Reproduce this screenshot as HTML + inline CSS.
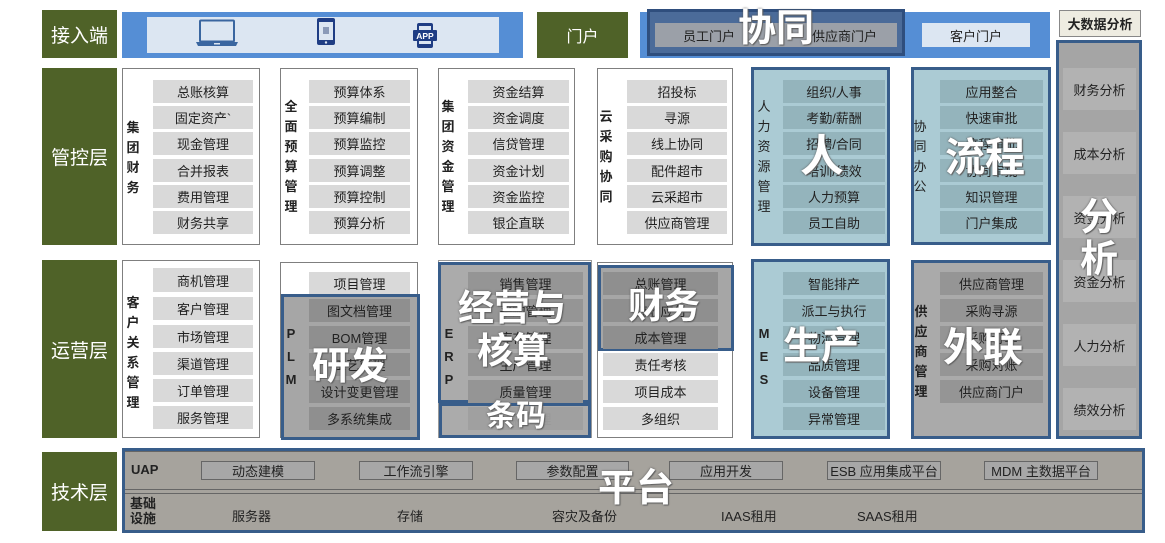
<!DOCTYPE html>
<html><head><meta charset="utf-8">
<style>
*{margin:0;padding:0;box-sizing:border-box}
body{width:1165px;height:543px;background:#fff;position:relative;overflow:hidden;font-family:"Liberation Sans","Noto Sans CJK SC",sans-serif;color:#222}
.a{position:absolute}
.g{background:#4f6228;color:#fff;font-size:19px;display:flex;align-items:center;justify-content:center}
.box{position:absolute;border:1px solid #7f7f7f;background:#fff}
.it{position:absolute;height:23px;background:#d9d9d9;font-size:13px;display:flex;align-items:center;justify-content:center;white-space:nowrap}
.vl{position:absolute;font-size:13px;font-weight:bold;width:14px;line-height:20px;text-align:center}
.bb{position:absolute;border:3px solid #385d8a}
.big{position:absolute;color:#fff;font-weight:bold;text-shadow:0 0 2px #555,1px 1px 1px #666;white-space:nowrap;line-height:1}
.btn{position:absolute;top:461px;height:19px;border:1px solid #666;background:#a7a7a7;font-size:13px;display:flex;align-items:center;justify-content:center}
.tt{position:absolute;top:506px;font-size:13px}
.an{position:absolute;left:1063px;width:73px;height:42px;background:#b2b2b2;font-size:13px;display:flex;align-items:center;justify-content:center}
</style></head><body>

<!-- left labels -->
<div class="a g" style="left:42px;top:10px;width:75px;height:48px">接入端</div>
<div class="a g" style="left:42px;top:68px;width:75px;height:177px">管控层</div>
<div class="a g" style="left:42px;top:260px;width:75px;height:178px">运营层</div>
<div class="a g" style="left:42px;top:452px;width:75px;height:79px">技术层</div>

<!-- access -->
<div class="a" style="left:122px;top:12px;width:401px;height:46px;background:#558ed5"></div>
<div class="a" style="left:147px;top:17px;width:352px;height:36px;background:#dce6f2"></div>
<svg class="a" style="left:195px;top:19px" width="44" height="28" viewBox="0 0 44 28"><rect x="5" y="1.5" width="34" height="21" rx="1" fill="none" stroke="#3a66a0" stroke-width="2"/><path d="M1 23h42l-2 4H3z" fill="#3a66a0"/><rect x="19" y="24" width="6" height="1.5" fill="#dce6f2"/></svg>
<svg class="a" style="left:316px;top:17px" width="20" height="29" viewBox="0 0 20 29"><rect x="1" y="1" width="18" height="27" rx="2" fill="#1f3d84"/><rect x="3" y="5" width="14" height="18" fill="#dce6f2"/><rect x="7" y="10" width="6" height="7" fill="#8a9ab8"/><circle cx="10" cy="25.5" r="1.2" fill="#dce6f2"/></svg>
<svg class="a" style="left:412px;top:22px" width="26" height="27" viewBox="0 0 26 27"><rect x="5" y="1" width="16" height="25" rx="2" fill="#1f3d84"/><rect x="7" y="4" width="12" height="18" fill="#dce6f2"/><rect x="1" y="8" width="24" height="11" rx="1" fill="#1f3d84"/><text x="13" y="17" font-size="8.5" font-weight="bold" fill="#fff" text-anchor="middle" font-family="Liberation Sans">APP</text></svg>

<!-- portal -->
<div class="a g" style="left:537px;top:12px;width:91px;height:46px;font-size:16px">门户</div>
<div class="a" style="left:640px;top:12px;width:410px;height:46px;background:#558ed5"></div>
<div class="a" style="left:647px;top:9px;width:258px;height:47px;background:#4b6b99;border:3px solid #2f4e7d"></div>
<div class="a" style="left:655px;top:23px;width:242px;height:24px;background:#9ba0a8"></div>
<div class="a" style="left:683px;top:26px;font-size:13px">员工门户</div>
<div class="a" style="left:812px;top:26px;font-size:13px">供应商门户</div>
<div class="a" style="left:922px;top:23px;width:108px;height:24px;background:#dce6f2;font-size:13px;display:flex;align-items:center;justify-content:center">客户门户</div>
<div class="big" style="left:738px;top:10px;font-size:38px">协同</div>

<!-- big data -->
<div class="a" style="left:1059px;top:10px;width:82px;height:27px;background:#eeece1;border:1px solid #888;font-size:13px;font-weight:bold;display:flex;align-items:center;justify-content:center">大数据分析</div>
<div class="a" style="left:1056px;top:40px;width:86px;height:399px;background:#a5a5a5;border:3px solid #385d8a"></div>
<div class="an" style="top:68px">财务分析</div>
<div class="an" style="top:132px">成本分析</div>
<div class="an" style="top:196px">资金分析</div>
<div class="an" style="top:260px">资金分析</div>
<div class="an" style="top:324px">人力分析</div>
<div class="an" style="top:388px">绩效分析</div>
<div class="big" style="left:1080px;top:197px;font-size:38px;line-height:42px;width:40px">分<br>析</div>

<!-- 管控层 -->
<div class="box" style="left:122px;top:68px;width:138px;height:177px"></div>
<div class="vl" style="left:126px;top:118px">集<br>团<br>财<br>务</div>
<div class="it" style="left:153px;top:80px;width:100px">总账核算</div>
<div class="it" style="left:153px;top:106px;width:100px">固定资产`</div>
<div class="it" style="left:153px;top:132px;width:100px">现金管理</div>
<div class="it" style="left:153px;top:159px;width:100px">合并报表</div>
<div class="it" style="left:153px;top:185px;width:100px">费用管理</div>
<div class="it" style="left:153px;top:211px;width:100px">财务共享</div>

<div class="box" style="left:280px;top:68px;width:138px;height:177px"></div>
<div class="vl" style="left:284px;top:97px">全<br>面<br>预<br>算<br>管<br>理</div>
<div class="it" style="left:309px;top:80px;width:101px">预算体系</div>
<div class="it" style="left:309px;top:106px;width:101px">预算编制</div>
<div class="it" style="left:309px;top:132px;width:101px">预算监控</div>
<div class="it" style="left:309px;top:159px;width:101px">预算调整</div>
<div class="it" style="left:309px;top:185px;width:101px">预算控制</div>
<div class="it" style="left:309px;top:211px;width:101px">预算分析</div>

<div class="box" style="left:438px;top:68px;width:137px;height:177px"></div>
<div class="vl" style="left:441px;top:97px">集<br>团<br>资<br>金<br>管<br>理</div>
<div class="it" style="left:468px;top:80px;width:101px">资金结算</div>
<div class="it" style="left:468px;top:106px;width:101px">资金调度</div>
<div class="it" style="left:468px;top:132px;width:101px">信贷管理</div>
<div class="it" style="left:468px;top:159px;width:101px">资金计划</div>
<div class="it" style="left:468px;top:185px;width:101px">资金监控</div>
<div class="it" style="left:468px;top:211px;width:101px">银企直联</div>

<div class="box" style="left:597px;top:68px;width:136px;height:177px"></div>
<div class="vl" style="left:599px;top:107px">云<br>采<br>购<br>协<br>同</div>
<div class="it" style="left:627px;top:80px;width:100px">招投标</div>
<div class="it" style="left:627px;top:106px;width:100px">寻源</div>
<div class="it" style="left:627px;top:132px;width:100px">线上协同</div>
<div class="it" style="left:627px;top:159px;width:100px">配件超市</div>
<div class="it" style="left:627px;top:185px;width:100px">云采超市</div>
<div class="it" style="left:627px;top:211px;width:100px">供应商管理</div>

<div class="bb" style="left:751px;top:67px;width:139px;height:179px;background:#abcbd4"></div>
<div class="vl" style="left:757px;top:97px;font-weight:normal">人<br>力<br>资<br>源<br>管<br>理</div>
<div class="it" style="left:783px;top:80px;width:102px;background:#94b4bc">组织/人事</div>
<div class="it" style="left:783px;top:106px;width:102px;background:#94b4bc">考勤/薪酬</div>
<div class="it" style="left:783px;top:132px;width:102px;background:#94b4bc">招聘/合同</div>
<div class="it" style="left:783px;top:159px;width:102px;background:#94b4bc">培训/绩效</div>
<div class="it" style="left:783px;top:185px;width:102px;background:#94b4bc">人力预算</div>
<div class="it" style="left:783px;top:211px;width:102px;background:#94b4bc">员工自助</div>
<div class="big" style="left:800px;top:135px;font-size:44px">人</div>

<div class="bb" style="left:911px;top:67px;width:140px;height:178px;background:#abcbd4"></div>
<div class="vl" style="left:913px;top:117px;font-weight:normal">协<br>同<br>办<br>公</div>
<div class="it" style="left:940px;top:80px;width:103px;background:#94b4bc">应用整合</div>
<div class="it" style="left:940px;top:106px;width:103px;background:#94b4bc">快速审批</div>
<div class="it" style="left:940px;top:132px;width:103px;background:#94b4bc">流程审批</div>
<div class="it" style="left:940px;top:159px;width:103px;background:#94b4bc">协同审批</div>
<div class="it" style="left:940px;top:185px;width:103px;background:#94b4bc">知识管理</div>
<div class="it" style="left:940px;top:211px;width:103px;background:#94b4bc">门户集成</div>
<div class="big" style="left:945px;top:138px;font-size:40px">流程</div>

<!-- 运营层 -->
<div class="box" style="left:122px;top:260px;width:138px;height:178px"></div>
<div class="vl" style="left:126px;top:293px">客<br>户<br>关<br>系<br>管<br>理</div>
<div class="it" style="left:153px;top:268px;width:100px;height:24px">商机管理</div>
<div class="it" style="left:153px;top:297px;width:100px">客户管理</div>
<div class="it" style="left:153px;top:325px;width:100px">市场管理</div>
<div class="it" style="left:153px;top:352px;width:100px">渠道管理</div>
<div class="it" style="left:153px;top:379px;width:100px">订单管理</div>
<div class="it" style="left:153px;top:406px;width:100px">服务管理</div>

<div class="box" style="left:280px;top:262px;width:138px;height:176px"></div>
<div class="it" style="left:309px;top:272px;width:101px">项目管理</div>
<div class="bb" style="left:281px;top:294px;width:139px;height:146px;background:#a6a6a6"></div>
<div class="vl" style="left:284px;top:322px;line-height:23px">P<br>L<br>M</div>
<div class="it" style="left:309px;top:299px;width:101px;background:#8f8f8f">图文档管理</div>
<div class="it" style="left:309px;top:326px;width:101px;background:#8f8f8f">BOM管理</div>
<div class="it" style="left:309px;top:353px;width:101px;background:#8f8f8f">工艺管理</div>
<div class="it" style="left:309px;top:380px;width:101px;background:#8f8f8f">设计变更管理</div>
<div class="it" style="left:309px;top:407px;width:101px;background:#8f8f8f">多系统集成</div>
<div class="big" style="left:312px;top:348px;font-size:38px">研发</div>

<div class="box" style="left:438px;top:260px;width:154px;height:178px;border-color:#999"></div>
<div class="bb" style="left:438px;top:262px;width:153px;height:141px;background:#ababab"></div>
<div class="bb" style="left:439px;top:403px;width:152px;height:35px;background:#ababab"></div>
<div class="vl" style="left:442px;top:322px;line-height:23px">E<br>R<br>P</div>
<div class="it" style="left:468px;top:272px;width:115px;background:#959595">销售管理</div>
<div class="it" style="left:468px;top:299px;width:115px;background:#959595">采购管理</div>
<div class="it" style="left:468px;top:326px;width:115px;background:#959595">库存管理</div>
<div class="it" style="left:468px;top:353px;width:115px;background:#959595">生产管理</div>
<div class="it" style="left:468px;top:380px;width:115px;background:#959595">质量管理</div>
<div class="it" style="left:468px;top:407px;width:115px;background:#a0a0a0;color:#999">物料管理</div>
<div class="big" style="left:458px;top:290px;font-size:36px">经营与</div>
<div class="big" style="left:477px;top:333px;font-size:36px">核算</div>
<div class="big" style="left:486px;top:402px;font-size:30px">条码</div>

<div class="box" style="left:597px;top:262px;width:136px;height:176px"></div>
<div class="bb" style="left:598px;top:265px;width:136px;height:86px;background:#a6a6a6"></div>
<div class="it" style="left:603px;top:272px;width:115px;background:#8f8f8f">总账管理</div>
<div class="it" style="left:603px;top:299px;width:115px;background:#8f8f8f">应收应付</div>
<div class="it" style="left:603px;top:326px;width:115px;background:#8f8f8f">成本管理</div>
<div class="it" style="left:603px;top:353px;width:115px">责任考核</div>
<div class="it" style="left:603px;top:380px;width:115px">项目成本</div>
<div class="it" style="left:603px;top:407px;width:115px">多组织</div>
<div class="big" style="left:628px;top:288px;font-size:36px">财务</div>

<div class="bb" style="left:751px;top:259px;width:139px;height:180px;background:#abcbd4"></div>
<div class="vl" style="left:757px;top:322px;line-height:23px">M<br>E<br>S</div>
<div class="it" style="left:783px;top:272px;width:102px;background:#94b4bc">智能排产</div>
<div class="it" style="left:783px;top:299px;width:102px;background:#94b4bc">派工与执行</div>
<div class="it" style="left:783px;top:326px;width:102px;background:#94b4bc">物流管理</div>
<div class="it" style="left:783px;top:353px;width:102px;background:#94b4bc">品质管理</div>
<div class="it" style="left:783px;top:380px;width:102px;background:#94b4bc">设备管理</div>
<div class="it" style="left:783px;top:407px;width:102px;background:#94b4bc">异常管理</div>
<div class="big" style="left:783px;top:328px;font-size:38px">生产</div>

<div class="bb" style="left:911px;top:260px;width:140px;height:179px;background:#aaaaaa"></div>
<div class="vl" style="left:914px;top:302px">供<br>应<br>商<br>管<br>理</div>
<div class="it" style="left:940px;top:272px;width:103px;background:#959595">供应商管理</div>
<div class="it" style="left:940px;top:299px;width:103px;background:#959595">采购寻源</div>
<div class="it" style="left:940px;top:326px;width:103px;background:#959595">采购订单</div>
<div class="it" style="left:940px;top:353px;width:103px;background:#959595">采购对账</div>
<div class="it" style="left:940px;top:380px;width:103px;background:#959595">供应商门户</div>
<div class="big" style="left:943px;top:328px;font-size:40px">外联</div>

<!-- 技术层 -->
<div class="a" style="left:122px;top:448px;width:1023px;height:85px;background:#a6a39d;border:3px solid #385d8a"></div>
<div class="a" style="left:125px;top:451px;width:1017px;height:1px;background:#666"></div>
<div class="a" style="left:125px;top:489px;width:1017px;height:1px;background:#666"></div>
<div class="a" style="left:125px;top:493px;width:1017px;height:1px;background:#666"></div>
<div class="a" style="left:131px;top:462px;font-size:13px;font-weight:bold">UAP</div>
<div class="btn" style="left:201px;width:114px">动态建模</div>
<div class="btn" style="left:359px;width:114px">工作流引擎</div>
<div class="btn" style="left:516px;width:113px">参数配置</div>
<div class="btn" style="left:669px;width:114px">应用开发</div>
<div class="btn" style="left:827px;width:114px">ESB 应用集成平台</div>
<div class="btn" style="left:984px;width:114px">MDM 主数据平台</div>
<div class="a" style="left:130px;top:496px;font-size:13px;font-weight:bold;line-height:15px">基础<br>设施</div>
<div class="tt" style="left:232px">服务器</div>
<div class="tt" style="left:397px">存储</div>
<div class="tt" style="left:552px">容灾及备份</div>
<div class="tt" style="left:721px">IAAS租用</div>
<div class="tt" style="left:857px">SAAS租用</div>
<div class="big" style="left:598px;top:470px;font-size:38px">平台</div>

</body></html>
